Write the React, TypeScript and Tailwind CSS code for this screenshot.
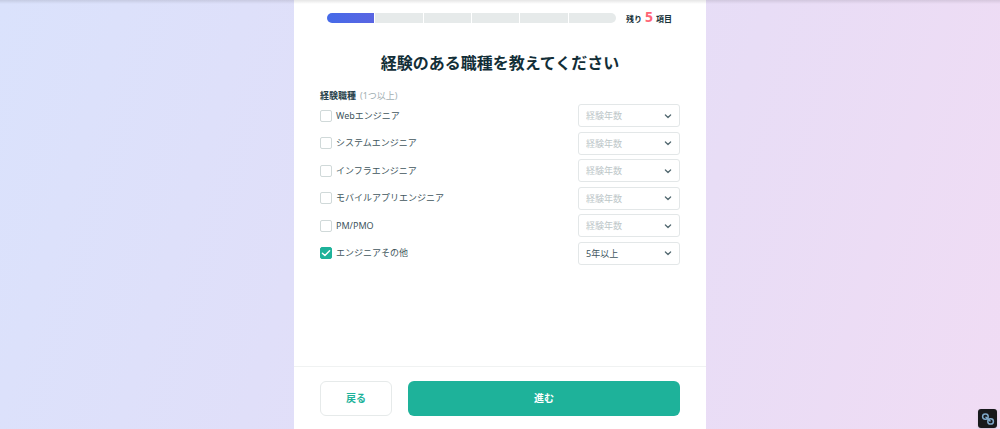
import { useState } from "react";

type Job = { id: string; label: string; years: string; checked: boolean };

const initialJobs: Job[] = [
  { id: "web", label: "Webエンジニア", years: "", checked: false },
  { id: "system", label: "システムエンジニア", years: "", checked: false },
  { id: "infra", label: "インフラエンジニア", years: "", checked: false },
  { id: "mobile", label: "モバイルアプリエンジニア", years: "", checked: false },
  { id: "pm", label: "PM/PMO", years: "", checked: false },
  { id: "other", label: "エンジニアその他", years: "5", checked: true },
];

function Progress() {
  return (
    <div className="flex items-center gap-[10px] pt-[9px] pr-[34px] pl-[33px]">
      <div
        role="progressbar"
        aria-label="進捗"
        aria-valuemin={0}
        aria-valuemax={6}
        aria-valuenow={1}
        className="grid h-[10px] flex-1 grid-cols-6 gap-px overflow-hidden rounded-full"
      >
        <span className="bg-linear-to-r from-[#456ae8] to-[#5965e2]" />
        <span className="bg-[#e6eaea]" />
        <span className="bg-[#e6eaea]" />
        <span className="bg-[#e6eaea]" />
        <span className="bg-[#e6eaea]" />
        <span className="bg-[#e6eaea]" />
      </div>
      <p className="flex items-baseline gap-[3px] text-[8px] leading-4 font-bold text-[#173239]">
        <span>残り</span>
        <span className="text-[14px] text-[#ff6575]">5</span>
        <span>項目</span>
      </p>
    </div>
  );
}

function JobRow({ job, onChange }: { job: Job; onChange: (job: Job) => void }) {
  return (
    <div className="flex items-center justify-between">
      <label htmlFor={job.id} className="flex items-center gap-1 text-[9px] leading-4 text-[#41565d]">
        <span className="grid size-3 place-items-center">
          <input
            id={job.id}
            type="checkbox"
            checked={job.checked}
            onChange={(e) => onChange({ ...job, checked: e.target.checked })}
            className="peer col-start-1 row-start-1 size-3 appearance-none rounded-[2px] border border-[#d0d9d9] bg-white checked:border-[#1eb29a] checked:bg-[#1eb29a]"
          />
          <svg
            viewBox="0 0 12 12"
            className="pointer-events-none col-start-1 row-start-1 hidden size-3 peer-checked:block"
            fill="none"
            stroke="white"
            strokeWidth="1.4"
            strokeLinecap="round"
            strokeLinejoin="round"
            aria-hidden="true"
          >
            <path d="M2.4 6.2 4.9 8.6 9.6 3.8" />
          </svg>
        </span>
        {job.label}
      </label>
      <div className="grid w-[102px] items-center">
        <select
          aria-label={`${job.label} 経験年数`}
          value={job.years}
          onChange={(e) => onChange({ ...job, years: e.target.value })}
          className={`col-start-1 row-start-1 h-[23px] appearance-none rounded-[3px] border border-[#e3e7e8] bg-white pr-5 pl-[7px] text-[9px] ${
            job.years ? "text-[#41565d]" : "text-[#bcc6c8]"
          }`}
        >
          <option value="">経験年数</option>
          <option value="1">1年未満</option>
          <option value="3">1〜3年</option>
          <option value="5">5年以上</option>
        </select>
        <svg
          viewBox="0 0 8 8"
          className="pointer-events-none col-start-1 row-start-1 mr-2 size-2 justify-self-end"
          fill="none"
          stroke="#536970"
          strokeWidth="1.3"
          strokeLinecap="round"
          strokeLinejoin="round"
          aria-hidden="true"
        >
          <path d="M1.4 3 4 5.5 6.6 3" />
        </svg>
      </div>
    </div>
  );
}

export default function App() {
  const [jobs, setJobs] = useState(initialJobs);
  const update = (next: Job) => setJobs(jobs.map((j) => (j.id === next.id ? next : j)));

  return (
    <div
      lang="ja"
      className="min-h-screen bg-[linear-gradient(107deg,#dae2fc_0%,#e0dff9_33%,#e8ddf6_68%,#f0dcf4_100%)] font-['Noto_Sans','Noto_Sans_CJK_JP',sans-serif]"
    >
      <div className="pointer-events-none absolute inset-x-0 top-0 h-1 bg-linear-to-b from-black/10 to-transparent" />
      <div className="mx-auto flex min-h-screen w-full max-w-[412px] flex-col bg-white">
        <Progress />
        <main className="px-[26px] pt-6 pb-6">
          <h1 className="text-center text-[16px] leading-6 font-bold text-[#122e37]">
            経験のある職種を教えてください
          </h1>
          <fieldset className="mt-[15px]">
            <legend className="flex gap-1 text-[9px] leading-3 text-[#a2afb3]">
              <span className="font-bold text-[#26414a]">経験職種</span>
              <span>(1つ以上)</span>
            </legend>
            <div className="grid h-[165px] grid-rows-6">
              {jobs.map((job) => (
                <JobRow key={job.id} job={job} onChange={update} />
              ))}
            </div>
          </fieldset>
        </main>
        <footer className="mt-auto flex gap-4 border-t border-[#f0f2f2] px-[26px] pt-[14px] pb-[13px]">
          <button
            type="button"
            className="h-[35px] w-[72px] rounded-md border border-[#e6eaea] bg-white text-[10px] font-bold text-[#1eb29a]"
          >
            戻る
          </button>
          <button type="button" className="h-[35px] flex-1 rounded-md bg-[#1eb29a] text-[10px] font-bold text-white">
            進む
          </button>
        </footer>
      </div>
      <button
        type="button"
        aria-label="リンク"
        className="fixed right-[3px] bottom-[1px] grid size-[19px] place-items-center rounded-[3px] bg-[#17191c] shadow-sm"
      >
        <svg
          viewBox="0 0 14 14"
          className="size-[14px]"
          fill="none"
          stroke="#7fa9cb"
          strokeWidth="1.5"
          strokeLinecap="round"
          aria-hidden="true"
        >
          <rect x="1.6" y="2" width="5.6" height="5.2" rx="2.6" />
          <rect x="6.8" y="6.8" width="5.6" height="5.2" rx="2.6" />
          <path d="M5 5.2 9 8.9" />
        </svg>
      </button>
    </div>
  );
}
